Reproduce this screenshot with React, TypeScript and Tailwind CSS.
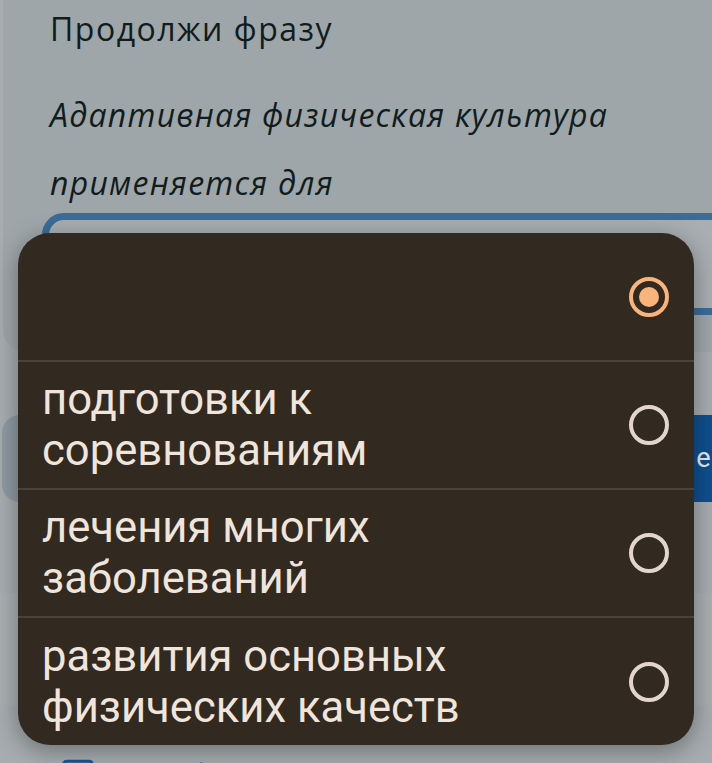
import React from 'react';
import { MessageSquareWarning } from 'lucide-react';

const options = [
  { id: 'none', lines: [] as string[], selected: true },
  { id: 'sport', lines: ['подготовки к', 'соревнованиям'], selected: false },
  { id: 'heal', lines: ['лечения многих', 'заболеваний'], selected: false },
  { id: 'dev', lines: ['развития основных', 'физических качеств'], selected: false },
];

function Radio({ checked }: { checked: boolean }) {
  if (checked) {
    return (
      <div className="w-[40px] h-[40px] rounded-full border-[4px] border-[#f8b47b] flex items-center justify-center shrink-0">
        <div className="w-[20px] h-[20px] rounded-full bg-[#f8b47b]" />
      </div>
    );
  }
  return <div className="w-[40px] h-[40px] rounded-full border-[4px] border-[#e1d5cc] shrink-0" />;
}

export default function App() {
  return (
    <div className="relative w-full h-[763px] overflow-hidden bg-[#a6acaf]">
      {/* Question card */}
      <div className="ml-[3px] -mr-[40px] rounded-b-[22px] bg-[#9ea6a9] pl-[39px] pt-[9px] pb-[37px] font-['Open_Sans',sans-serif] text-[#111c1d]">
        <div className="pl-[8px] text-[32px] tracking-[1.5px] leading-[40px]">Продолжи фразу</div>
        <div className="pl-[8px] mt-[32px] text-[32px] tracking-[1.25px] italic leading-[68px]">
          <div>Адаптивная физическая культура</div>
          <div>применяется для</div>
        </div>
        <div className="-mt-[4px] -mr-[20px] h-[102px] rounded-[22px] border-[7px] border-[#3b6c98] bg-[#a8aeb1]" />
      </div>

      {/* Buttons */}
      <div className="mt-[63px] flex gap-[12px] h-[87px] font-['Roboto',sans-serif]">
        <div className="ml-[2px] w-[340px] shrink-0 rounded-[18px] bg-[#8e99a2]" />
        <div className="w-[400px] shrink-0 rounded-[18px] bg-[#104e8e] flex items-center pl-[267px] text-[27px] tracking-[2.5px] whitespace-nowrap text-[#e6ebf1]">
          Проверить
        </div>
      </div>

      {/* Lower section */}
      <div className="mt-[91px] h-[112px] bg-[#a9afb1]" />
      <div className="mt-[52px] pl-[61px] flex items-start gap-[30px] font-['Roboto',sans-serif] text-[34px] leading-[40px] text-[#1d5590]">
        <MessageSquareWarning className="w-[34px] h-[34px] shrink-0" strokeWidth={2.2} />
        <span className="-mt-[1px] whitespace-nowrap">Сообщить о неверной задаче</span>
      </div>

      {/* Popup menu */}
      <div className="absolute left-[18px] top-[233px] w-[676px] rounded-[32px] bg-[#322920] overflow-hidden shadow-[0_6px_24px_rgba(0,0,0,0.35)] font-['Roboto',sans-serif]">
        {options.map((o, i) => (
          <div
            key={o.id}
            className={
              'flex items-center justify-between pl-[24px] pr-[25px] ' +
              (i === 0 ? 'h-[127px]' : i === 3 ? 'h-[129px] border-t-2 border-[#4b423a]' : 'h-[128px] border-t-2 border-[#4b423a]')
            }
          >
            <div className="text-[43.6px] leading-[51px] text-[#efe5dc]">
              {o.lines.map((l) => (
                <div key={l}>{l}</div>
              ))}
            </div>
            <Radio checked={o.selected} />
          </div>
        ))}
      </div>
    </div>
  );
}
